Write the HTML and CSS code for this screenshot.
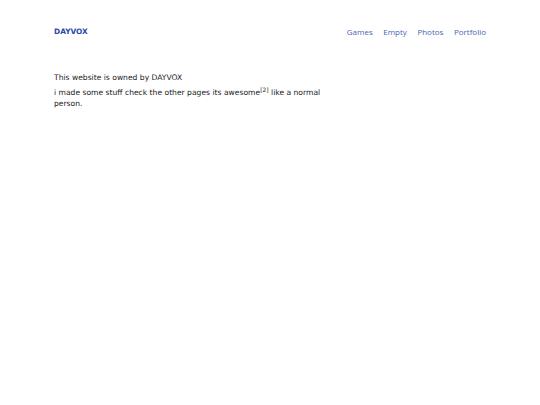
FILE: index.html
```html
<!DOCTYPE html>
<html>
<head>
<meta charset="utf-8">
<link rel="stylesheet" href="styles.css">
</head>
<body>
<div class="page">
  <header class="header">
    <a class="logo" href="#">DAYVOX</a>
    <nav class="nav">
      <a href="#">Games</a>
      <a href="#">Empty</a>
      <a href="#">Photos</a>
      <a href="#">Portfolio</a>
    </nav>
  </header>
  <main class="content">
    <p class="line">This website is owned by DAYVOX</p>
    <p class="line wrap">i made some stuff check the other pages its awesome<sup>[2]</sup> like a normal person.</p>
  </main>
</div>
</body>
</html>
```

FILE: styles.css
```css
html, body {
  margin: 0;
  padding: 0;
  background: #ffffff;
}
body {
  font-family: "DejaVu Sans", sans-serif;
  color: #1a1a1a;
}
.page {
  padding: 25.5px 54px 0 54px;
}
.header {
  display: flex;
  justify-content: space-between;
  align-items: center;
  height: 12px;
}
.logo {
  font-size: 7.4px;
  font-weight: bold;
  color: #2b4ba8;
  text-decoration: none;
}
.nav {
  display: flex;
  gap: 10.5px;
}
.nav a {
  font-family: "Open Sans", sans-serif;
  font-size: 8px;
  color: #4a64b4;
  text-decoration: none;
}
.content {
  margin-top: 34.5px;
}
.line {
  font-size: 7.6px;
  line-height: 11px;
  margin: 0 0 3.5px 0;
}
.wrap {
  max-width: 275px;
}
sup {
  font-size: 6px;
  line-height: 0;
  vertical-align: 3px;
}
```
